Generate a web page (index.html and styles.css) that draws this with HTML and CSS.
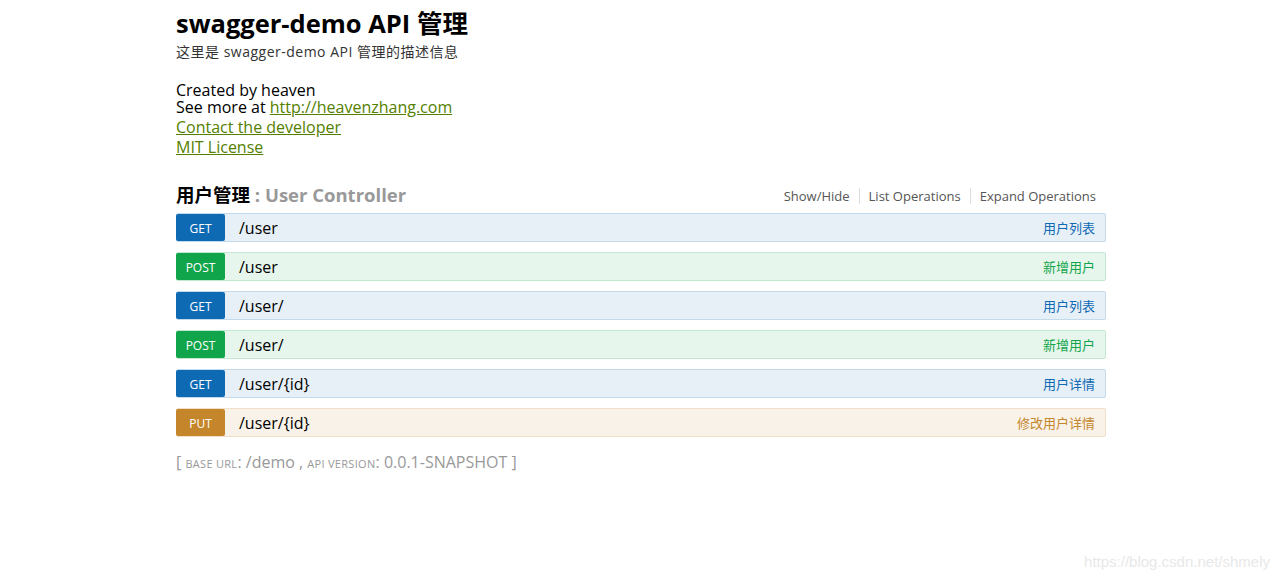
FILE: index.html
```html
<!DOCTYPE html>
<html lang="zh-CN">
<head>
    <meta charset="UTF-8">
    <title>Swagger UI</title>
    <link rel="stylesheet" href="styles.css">
</head>
<body>
    <div class="container">
        <div class="info">
            <h1 class="info-title">swagger-demo API 管理</h1>
            <p class="info-desc">这里是 swagger-demo API 管理的描述信息</p>
            <div class="info-meta">
                <div>Created by heaven</div>
                <div>See more at <a href="#">http://heavenzhang.com</a></div>
                <div class="meta-link"><a href="#">Contact the developer</a></div>
                <div class="meta-link"><a href="#">MIT License</a></div>
            </div>
        </div>

        <div class="resource">
            <div class="resource-heading">
                <h2>用户管理 <span class="resource-sub">: User Controller</span></h2>
                <ul class="options">
                    <li>Show/Hide</li>
                    <li>List Operations</li>
                    <li>Expand Operations</li>
                </ul>
            </div>

            <ul class="endpoints">
                <li class="op get">
                    <span class="method">GET</span>
                    <span class="path">/user</span>
                    <span class="summary">用户列表</span>
                </li>
                <li class="op post">
                    <span class="method">POST</span>
                    <span class="path">/user</span>
                    <span class="summary">新增用户</span>
                </li>
                <li class="op get">
                    <span class="method">GET</span>
                    <span class="path">/user/</span>
                    <span class="summary">用户列表</span>
                </li>
                <li class="op post">
                    <span class="method">POST</span>
                    <span class="path">/user/</span>
                    <span class="summary">新增用户</span>
                </li>
                <li class="op get">
                    <span class="method">GET</span>
                    <span class="path">/user/{id}</span>
                    <span class="summary">用户详情</span>
                </li>
                <li class="op put">
                    <span class="method">PUT</span>
                    <span class="path">/user/{id}</span>
                    <span class="summary">修改用户详情</span>
                </li>
            </ul>
        </div>

        <div class="footer">
            [ <span class="label">base url</span>: /demo , <span class="label">api version</span>: 0.0.1-SNAPSHOT ]
        </div>
    </div>

    <div class="watermark">https://blog.csdn.net/shmely</div>
</body>
</html>
```

FILE: styles.css
```css
* {
    margin: 0;
    padding: 0;
    box-sizing: border-box;
}

body {
    font-family: "Open Sans", "Noto Sans CJK SC", sans-serif;
    color: #000;
    background: #fff;
    min-height: 578px;
}

ul {
    list-style: none;
}

.container {
    width: 932px;
    margin: 0 auto;
    padding: 6px 0 0 2px;
}

.info-title {
    font-size: 25.5px;
    font-weight: bold;
    line-height: 34px;
}

.info-desc {
    font-size: 14px;
    letter-spacing: 0.5px;
    color: #333;
    line-height: 20px;
    margin-top: 2px;
}

.info-meta {
    margin-top: 20px;
    font-size: 16px;
}

.info-meta div {
    line-height: 16px;
}

.info-meta div:nth-child(2) {
    line-height: 19px;
}

.info-meta .meta-link {
    line-height: 20px;
}

.info-meta a {
    color: #547f00;
}

.resource {
    margin-top: 26px;
}

.resource-heading {
    display: flex;
    justify-content: space-between;
    align-items: flex-end;
    padding-bottom: 6px;
}

.resource-heading h2 {
    font-size: 18.5px;
    font-weight: bold;
    line-height: 24px;
}

.resource-sub {
    color: #999;
}

.options {
    display: flex;
    font-size: 13px;
    color: #555;
    padding: 0 10px 3px 0;
}

.options li {
    padding: 0 9px;
    border-left: 1px solid #ddd;
    line-height: 16px;
}

.options li:first-child {
    border-left: none;
}

.options li:last-child {
    padding-right: 0;
}

.endpoints {
    display: flex;
    flex-direction: column;
    gap: 10px;
}

.op {
    display: flex;
    align-items: center;
    height: 29px;
    border: 1px solid;
    border-radius: 2px;
}

.method {
    width: 49px;
    height: 27px;
    margin-left: -1px;
    border-radius: 2px;
    color: #fff;
    font-size: 12px;
    display: flex;
    align-items: center;
    justify-content: center;
    padding-top: 2px;
}

.path {
    flex: 1;
    font-size: 16px;
    padding-left: 14px;
}

.summary {
    font-size: 13px;
    padding-right: 10px;
}

.get {
    background: #e7f0f7;
    border-color: #c3d9ec;
}

.get .method {
    background: #0f6ab4;
}

.get .summary {
    color: #0f6ab4;
}

.post {
    background: #e7f6ec;
    border-color: #c3e8d1;
}

.post .method {
    background: #10a54a;
}

.post .summary {
    color: #10a54a;
}

.put {
    background: #f9f2e9;
    border-color: #f0e0ca;
}

.put .method {
    background: #c5862b;
}

.put .summary {
    color: #c5862b;
}

.footer {
    margin-top: 14px;
    font-size: 16px;
    color: #999;
    line-height: 22px;
}

.footer .label {
    text-transform: uppercase;
    font-size: 11px;
    letter-spacing: 0.3px;
}

.watermark {
    position: absolute;
    right: 10px;
    bottom: 8px;
    font-family: "Liberation Sans", sans-serif;
    font-size: 15px;
    color: #e8e8e8;
}
```
